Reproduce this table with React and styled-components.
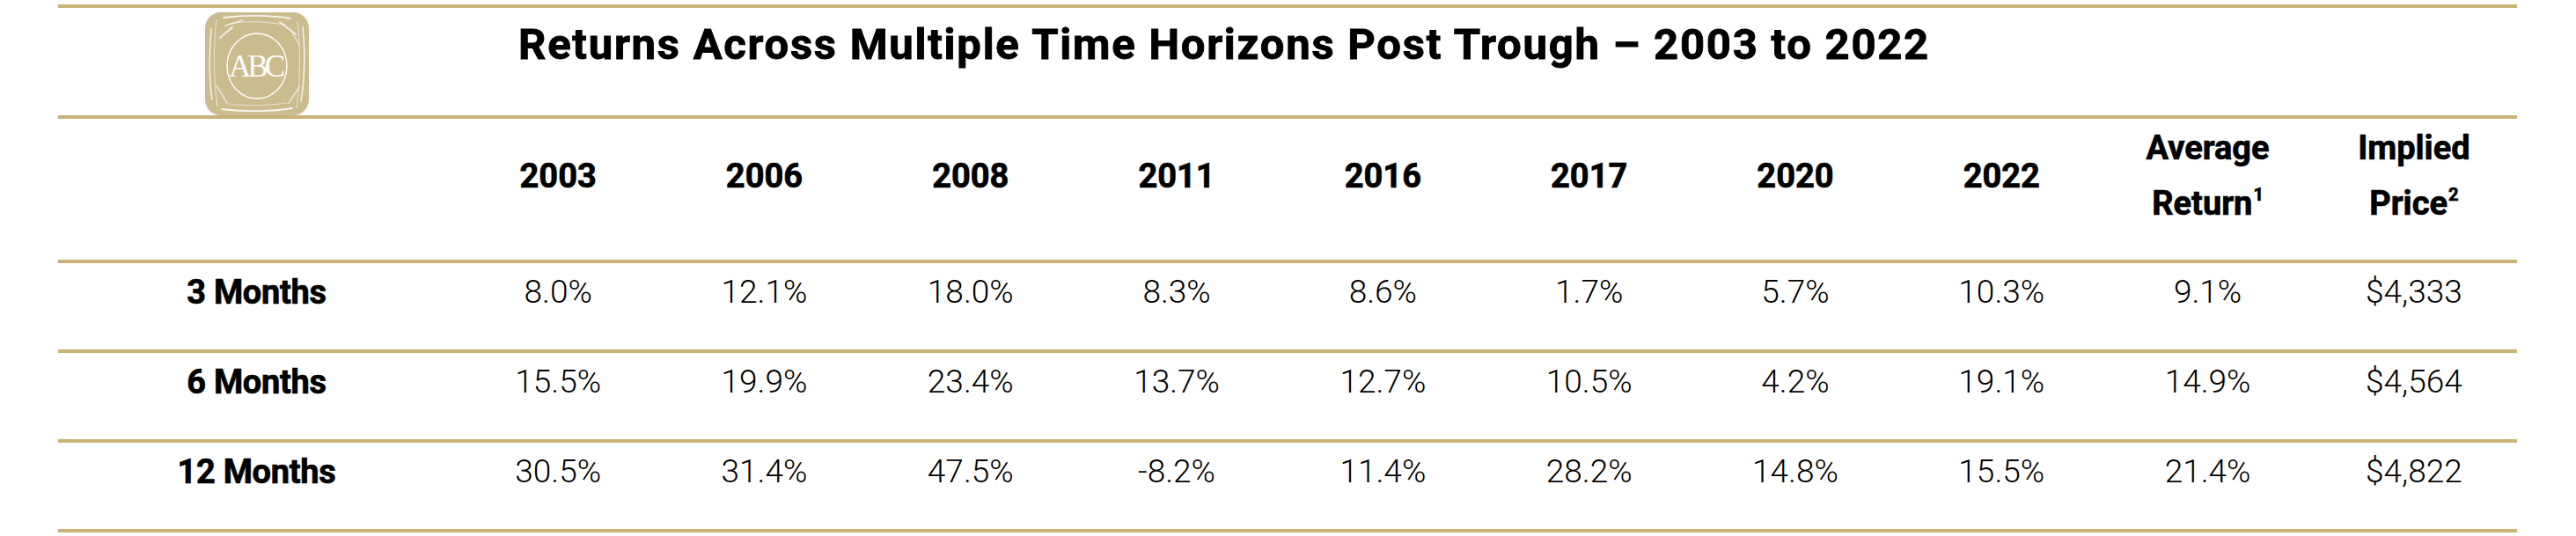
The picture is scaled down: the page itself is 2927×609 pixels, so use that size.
import React from 'react'
import styled, { createGlobalStyle } from 'styled-components'

const GOLD = '#c7b476'

const Global = createGlobalStyle`
  html, body {
    margin: 0;
    padding: 0;
    background: #ffffff;
  }
  body {
    font-family: Roboto, "Liberation Sans", sans-serif;
    color: #000;
  }
`

const Wrapper = styled.div`
  width: 2794px;
  margin: 5px 0 0 66px;
  border-top: 4px solid ${GOLD};
`

const TitleRow = styled.div`
  display: grid;
  grid-template-columns: 451px 1fr;
  height: 122px;
  border-bottom: 4px solid ${GOLD};
`

const LogoCell = styled.div`
  display: flex;
  justify-content: center;
  padding-top: 4px;
`

const Title = styled.h1`
  margin: 12px 0 0 72px;
  font-size: 49px;
  line-height: 60px;
  font-weight: 700;
  letter-spacing: 1.75px;
  -webkit-text-stroke: 0.9px #000;
  white-space: nowrap;
`

const Row = styled.div`
  display: grid;
  grid-template-columns: 451px repeat(10, 1fr);
  align-items: center;
  height: ${({ $height }) => $height}px;
  padding-bottom: ${({ $pad }) => $pad}px;
  box-sizing: content-box;
  border-bottom: 4px solid ${GOLD};
`

const HeadCell = styled.div`
  text-align: center;
  font-size: 38px;
  line-height: 63px;
  font-weight: 700;
  -webkit-text-stroke: 0.7px #000;
`

const Sup = styled.sup`
  font-size: 20px;
  line-height: 0;
  vertical-align: 16px;
  margin-left: 1px;
`

const Label = styled.div`
  text-align: center;
  font-size: 38px;
  line-height: 40px;
  font-weight: 700;
  letter-spacing: -0.3px;
  -webkit-text-stroke: 0.7px #000;
`

const Value = styled.div`
  text-align: center;
  font-size: 37px;
  line-height: 40px;
  font-weight: 300;
`

const Logo = () => (
  <svg width="120" height="119" viewBox="0 0 120 119">
    <rect x="1" y="1" width="118" height="117" rx="18" fill="#cbbc8f" />
    <g stroke="#ffffff" fill="none" strokeLinecap="round">
      <path d="M8 20 C 6 45, 5 75, 9 100" strokeWidth="1.6" opacity="0.8" />
      <path d="M14 10 C 10 40, 11 80, 15 108" strokeWidth="1" opacity="0.6" />
      <path d="M112 18 C 115 45, 114 80, 110 102" strokeWidth="1.6" opacity="0.8" />
      <path d="M106 12 C 110 40, 109 80, 105 110" strokeWidth="1" opacity="0.6" />
      <path d="M22 7 C 45 4, 75 4, 98 8" strokeWidth="1.8" opacity="0.85" />
      <path d="M30 14 C 50 10, 70 12, 92 15" strokeWidth="1" opacity="0.6" />
      <path d="M20 111 C 45 114, 78 114, 100 110" strokeWidth="1.8" opacity="0.85" />
      <path d="M28 105 C 50 108, 72 107, 94 104" strokeWidth="1" opacity="0.55" />
      <path d="M18 30 L 32 18" strokeWidth="2.2" opacity="0.7" />
      <path d="M24 16 L 44 10" strokeWidth="1.4" opacity="0.7" />
      <path d="M86 12 L 104 26" strokeWidth="2" opacity="0.7" />
      <path d="M98 20 L 108 38" strokeWidth="1.4" opacity="0.6" />
      <path d="M14 84 L 26 104" strokeWidth="1.6" opacity="0.6" />
      <path d="M96 104 L 108 86" strokeWidth="1.6" opacity="0.6" />
      <ellipse cx="60" cy="62" rx="34" ry="37" strokeWidth="1.4" />
    </g>
    <text
      x="60"
      y="74"
      textAnchor="middle"
      fill="#ffffff"
      fontFamily="'Liberation Serif', serif"
      fontSize="35"
      textLength="64"
    >
      ABC
    </text>
  </svg>
)

const years = ['2003', '2006', '2008', '2011', '2016', '2017', '2020', '2022']

const rows = [
  { label: '3 Months', values: ['8.0%', '12.1%', '18.0%', '8.3%', '8.6%', '1.7%', '5.7%', '10.3%', '9.1%', '$4,333'] },
  { label: '6 Months', values: ['15.5%', '19.9%', '23.4%', '13.7%', '12.7%', '10.5%', '4.2%', '19.1%', '14.9%', '$4,564'] },
  { label: '12 Months', values: ['30.5%', '31.4%', '47.5%', '-8.2%', '11.4%', '28.2%', '14.8%', '15.5%', '21.4%', '$4,822'] },
]

export default function App() {
  return (
    <>
      <Global />
      <Wrapper>
        <TitleRow>
          <LogoCell>
            <Logo />
          </LogoCell>
          <Title>Returns Across Multiple Time Horizons Post Trough – 2003 to 2022</Title>
        </TitleRow>

        <Row $height={130} $pad={30}>
          <div />
          {years.map(y => (
            <HeadCell key={y}>{y}</HeadCell>
          ))}
          <HeadCell>
            Average
            <br />
            Return<Sup>1</Sup>
          </HeadCell>
          <HeadCell>
            Implied
            <br />
            Price<Sup>2</Sup>
          </HeadCell>
        </Row>

        {rows.map(r => (
          <Row key={r.label} $height={66} $pad={32}>
            <Label>{r.label}</Label>
            {r.values.map((v, i) => (
              <Value key={i}>{v}</Value>
            ))}
          </Row>
        ))}
      </Wrapper>
    </>
  )
}
